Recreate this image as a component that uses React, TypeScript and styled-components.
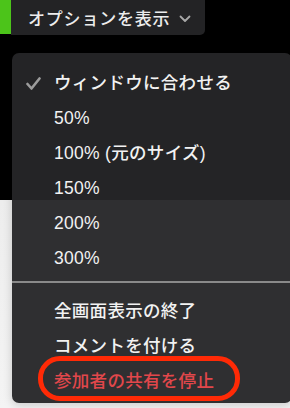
import React from "react";
import styled, { createGlobalStyle } from "styled-components";

const Global = createGlobalStyle`
  html, body { margin: 0; padding: 0; }
  body {
    width: 290px;
    height: 408px;
    overflow: hidden;
    font-family: "Liberation Sans", "Noto Sans CJK JP", sans-serif;
    background: linear-gradient(to bottom, #000 0px, #000 200px, #ededed 200px, #f4f4f4 408px);
  }
`;

const Page = styled.div`
  width: 290px;
  height: 408px;
  display: flex;
  flex-direction: column;
`;

const TopBar = styled.div`
  display: flex;
  height: 35px;
`;

const GreenTab = styled.div`
  width: 11px;
  height: 34px;
  background: #4cc41a;
`;

const OptionsButton = styled.div`
  width: 194px;
  height: 35px;
  background: #232325;
  border-bottom-right-radius: 5px;
  display: flex;
  align-items: center;
  padding-left: 17px;
  box-sizing: border-box;
  gap: 9px;
  color: #ececec;
  font-size: 17px;
  font-weight: 500;
  letter-spacing: 0.8px;
`;

const Chevron = styled.svg`
  width: 12px;
  height: 8px;
  margin-top: 2px;
`;

const Menu = styled.div`
  position: relative;
  margin: 18px 0 0 12px;
  width: 280px;
  height: 350px;
  box-sizing: border-box;
  background: rgba(38, 38, 40, 0.955);
  border-radius: 7px;
  padding-top: 12px;
  box-shadow: 0 2px 10px rgba(0, 0, 0, 0.18);
  display: flex;
  flex-direction: column;
`;

const Item = styled.div<{ $danger?: boolean }>`
  height: 35px;
  display: flex;
  align-items: center;
  padding-left: 42px;
  position: relative;
  font-size: 17.5px;
  line-height: 24px;
  font-weight: 500;
  color: ${(p) => (p.$danger ? "#e2474b" : "#f2f2f2")};
  letter-spacing: 0.3px;
`;

const Check = styled.svg`
  position: absolute;
  left: 14px;
  top: 12px;
  width: 15px;
  height: 13px;
`;

const Separator = styled.div`
  height: 2px;
  margin: 6px 0 10px;
  background: #8a8a8a;
`;

const Highlight = styled.div`
  position: absolute;
  left: 26px;
  top: 303px;
  width: 202px;
  height: 45px;
  box-sizing: border-box;
  border: 5px solid #ff2a06;
  border-radius: 22px;
  pointer-events: none;
`;

export default function App() {
  const zooms = ["50%", "100% (元のサイズ)", "150%", "200%", "300%"];
  return (
    <Page>
      <Global />
      <TopBar>
        <GreenTab />
        <OptionsButton>
          <span>オプションを表示</span>
          <Chevron viewBox="0 0 12 8">
            <path d="M1.5 1.5 L6 6 L10.5 1.5" fill="none" stroke="#a8a8a8" strokeWidth="1.8" strokeLinecap="round" strokeLinejoin="round" />
          </Chevron>
        </OptionsButton>
      </TopBar>
      <Menu>
        <Item>
          <Check viewBox="0 0 15 13">
            <path d="M1.5 7 L5.5 11.5 L13.5 1.5" fill="none" stroke="#9c9c9c" strokeWidth="2.6" strokeLinecap="round" strokeLinejoin="round" />
          </Check>
          ウィンドウに合わせる
        </Item>
        {zooms.map((z) => (
          <Item key={z}>{z}</Item>
        ))}
        <Separator />
        <Item>全画面表示の終了</Item>
        <Item>コメントを付ける</Item>
        <Item $danger>参加者の共有を停止</Item>
        <Highlight />
      </Menu>
    </Page>
  );
}
